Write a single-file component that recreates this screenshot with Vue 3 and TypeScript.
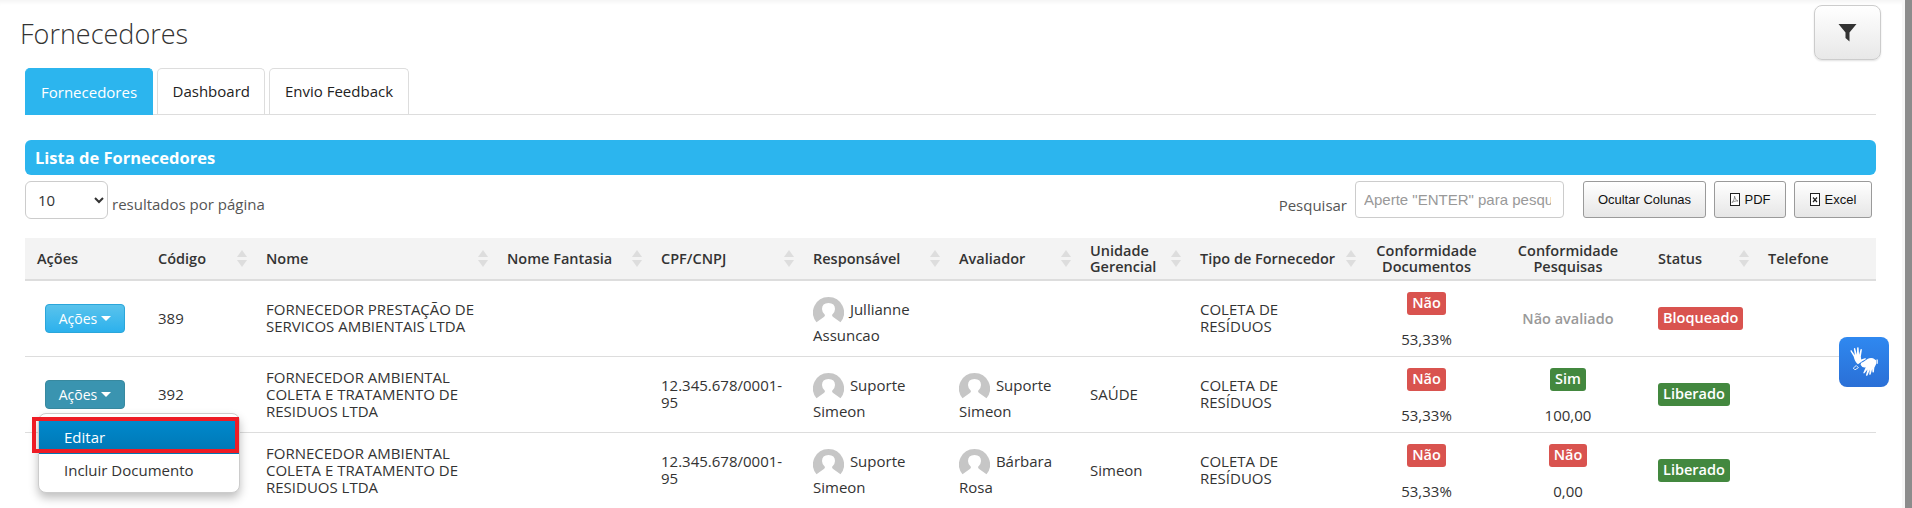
<script setup lang="ts">
interface Person { first: string; rest: string }
interface Row {
  code: string
  name: string
  doc: string
  resp: Person
  aval: Person | null
  unit: string
  type: string
  confDoc: string
  search: { label: string; ok: boolean; value: string } | null
  status: string
  statusOk: boolean
  open: boolean
  covered: boolean
}
const rows: Row[] = [
  { code: '389', name: 'FORNECEDOR PRESTAÇÃO DE SERVICOS AMBIENTAIS LTDA', doc: '', resp: { first: 'Jullianne', rest: 'Assuncao' }, aval: null, unit: '', type: 'COLETA DE RESÍDUOS', confDoc: '53,33%', search: null, status: 'Bloqueado', statusOk: false, open: false, covered: false },
  { code: '392', name: 'FORNECEDOR AMBIENTAL COLETA E TRATAMENTO DE RESIDUOS LTDA', doc: '12.345.678/0001-95', resp: { first: 'Suporte', rest: 'Simeon' }, aval: { first: 'Suporte', rest: 'Simeon' }, unit: 'SAÚDE', type: 'COLETA DE RESÍDUOS', confDoc: '53,33%', search: { label: 'Sim', ok: true, value: '100,00' }, status: 'Liberado', statusOk: true, open: true, covered: false },
  { code: '', name: 'FORNECEDOR AMBIENTAL COLETA E TRATAMENTO DE RESIDUOS LTDA', doc: '12.345.678/0001-95', resp: { first: 'Suporte', rest: 'Simeon' }, aval: { first: 'Bárbara', rest: 'Rosa' }, unit: 'Simeon', type: 'COLETA DE RESÍDUOS', confDoc: '53,33%', search: { label: 'Não', ok: false, value: '0,00' }, status: 'Liberado', statusOk: true, open: false, covered: true }
]
const headers = [
  { t: 'Ações', s: false, c: false },
  { t: 'Código', s: true, c: false },
  { t: 'Nome', s: true, c: false },
  { t: 'Nome Fantasia', s: true, c: false },
  { t: 'CPF/CNPJ', s: true, c: false },
  { t: 'Responsável', s: true, c: false },
  { t: 'Avaliador', s: true, c: false },
  { t: 'Unidade Gerencial', s: true, c: false },
  { t: 'Tipo de Fornecedor', s: true, c: false },
  { t: 'Conformidade Documentos', s: false, c: true },
  { t: 'Conformidade Pesquisas', s: false, c: true },
  { t: 'Status', s: true, c: false },
  { t: 'Telefone', s: false, c: false }
]
const colWidths = [121, 108, 241, 154, 152, 146, 131, 110, 175, 127, 156, 110, 120]
const avatarPath = 'M15.5 0A15.5 15.5 0 0 0 3.5 25.3L10.5 20.2Q12 19.200 12 18 9 15.500 9 12 9 6 15.500 6 22 6 22 12 22 15.500 19 18 19 19.200 20.500 20.200L27.500 25.300A15.5 15.5 0 0 0 15.500 0Z'
</script>

<template>
  <div class="page">
    <main class="main">
      <header class="top">
        <h1 class="title">Fornecedores</h1>
        <button class="filter" type="button" aria-label="Filtro">
          <svg width="19" height="19" viewBox="0 0 19 19"><path d="M0.5 1h18L11.5 9.5V18.5L7.5 15V9.5Z" fill="#333" /></svg>
        </button>
      </header>

      <nav class="tabs">
        <a class="tab active">Fornecedores</a>
        <a class="tab">Dashboard</a>
        <a class="tab">Envio Feedback</a>
      </nav>

      <div class="bar">Lista de Fornecedores</div>

      <div class="tools">
        <div class="length">
          <select class="sel"><option>10</option></select>
          <span class="muted">resultados por página</span>
        </div>
        <div class="right">
          <span class="muted search-label">Pesquisar</span>
          <input class="search" type="text" placeholder='Aperte "ENTER" para pesquisar' />
          <button class="btn w-col" type="button">Ocultar Colunas</button>
          <button class="btn w-pdf" type="button">
            <svg class="file" width="10" height="13" viewBox="0 0 10 13"><rect x=".5" y=".5" width="9" height="12" fill="#fff" stroke="#222" /><path d="M2 9.5C3.5 8 4.6 5.5 4.6 3.2 5 5.5 6 7.4 8 8 6 7.800 3.800 8.200 2 9.500Z" fill="none" stroke="#777" stroke-width=".8" /></svg>
            PDF
          </button>
          <button class="btn w-xls" type="button">
            <svg class="file" width="10" height="13" viewBox="0 0 10 13"><rect x=".5" y=".5" width="9" height="12" fill="#fff" stroke="#222" /><path d="M3 4.5l4 4.5M7 4.5l-4 4.5" stroke="#222" stroke-width="1.2" /></svg>
            Excel
          </button>
        </div>
      </div>

      <table class="grid">
        <colgroup>
          <col v-for="(w, i) in colWidths" :key="i" :style="{ width: w + 'px' }" />
        </colgroup>
        <thead>
          <tr>
            <th v-for="h in headers" :key="h.t" :class="{ center: h.c }">
              {{ h.t }}
              <span v-if="h.s" class="sort"><i class="up"></i><i class="down"></i></span>
            </th>
          </tr>
        </thead>
        <tbody>
          <tr v-for="(r, idx) in rows" :key="idx">
            <td class="act">
              <button v-if="!r.covered" class="acoes" :class="{ pressed: r.open }" type="button">Ações <i class="caret"></i></button>
              <div v-if="r.open" class="menu">
                <div class="item selected">Editar</div>
                <div class="item">Incluir Documento</div>
                <div class="mark"></div>
              </div>
            </td>
            <td>{{ r.code }}</td>
            <td>{{ r.name }}</td>
            <td></td>
            <td>{{ r.doc }}</td>
            <td class="person">
              <svg class="avatar" viewBox="0 0 31 27"><path :d="avatarPath" fill="#c6c6c6" /></svg>
              {{ r.resp.first }} {{ r.resp.rest }}
            </td>
            <td class="person">
              <template v-if="r.aval">
                <svg class="avatar" viewBox="0 0 31 27"><path :d="avatarPath" fill="#c6c6c6" /></svg>
                {{ r.aval.first }} {{ r.aval.rest }}
              </template>
            </td>
            <td>{{ r.unit }}</td>
            <td class="type">{{ r.type }}</td>
            <td>
              <div class="stack">
                <span class="badge red">Não</span>
                <span>{{ r.confDoc }}</span>
              </div>
            </td>
            <td>
              <div v-if="r.search" class="stack">
                <span class="badge" :class="r.search.ok ? 'green' : 'red'">{{ r.search.label }}</span>
                <span>{{ r.search.value }}</span>
              </div>
              <div v-else class="none">Não avaliado</div>
            </td>
            <td><span class="badge" :class="r.statusOk ? 'green' : 'red'">{{ r.status }}</span></td>
            <td></td>
          </tr>
        </tbody>
      </table>

      <button class="libras" type="button" aria-label="Libras">
        <svg width="30" height="31" viewBox="0 0 34 36" fill="#fff">
          <path d="M5 11L1.500 5.200Q1 3.800 2.200 3.600L6.500 9.500 5.200 2.300Q5.300 1 6.600 1.200L8.800 9 9 .9Q9.500 -.2 10.700 .6L11.300 9 13 2.700Q14 1.800 14.600 3L13.300 11.300 13.800 14.500 18 13Q20 12.800 19 14.300L15 16.500 10 20Q6.500 18 5 11Z" />
          <path d="M13 20.500Q13 18 16 17.500L21 14Q24 12 27.500 13L31 15.500V20L29 24 28.500 29Q27.500 30.500 26.800 29L26.500 25.500 24.800 31.500Q23.800 32.800 23 31.500L23.800 26 21 33Q20 34 19.300 32.800L21 26 17.500 30.500Q16.500 31 16.200 29.800L19 23.500Q15 24.500 13 20.500Z" />
          <rect x="31.500" y="14.500" width="1.500" height="5" />
          <path d="M8 21.500L4.500 24.500 6.500 26.500 10.500 24Z" fill="none" stroke="#fff" stroke-width="1" />
        </svg>
      </button>
    </main>
    <div class="scrollbar"></div>
  </div>
</template>

<style>
html, body { margin: 0; height: 100%; overflow: hidden; background: #fff; }
</style>

<style scoped>
.page {
  display: flex;
  width: 1912px;
  height: 508px;
  overflow: hidden;
  font-family: "Open Sans", sans-serif;
  font-size: 15px;
  line-height: 17px;
  color: #333;
  background: #fff;
}
.main {
  position: relative;
  flex: 1;
  min-width: 0;
  padding: 5px 26px 0 25px;
  box-shadow: inset 0 5px 4px -3px rgba(0, 0, 0, .05);
}
.scrollbar {
  box-sizing: border-box;
  width: 10px;
  background: #8c8c8c;
  border-left: 3px solid #f7f7f7;
  flex: none;
}
.top {
  display: flex;
  justify-content: space-between;
  align-items: flex-start;
  height: 63px;
  margin-right: -5px;
}
.title {
  margin: 11px 0 0 -5px;
  font-size: 27px;
  line-height: 36px;
  font-weight: 300;
  color: #333;
}
.filter {
  width: 67px;
  height: 55px;
  padding: 0;
  display: flex;
  align-items: center;
  justify-content: center;
  border: 1px solid #ccc;
  border-radius: 8px;
  background: linear-gradient(#fff, #e8e8e8);
  box-shadow: 0 1px 2px rgba(0, 0, 0, .12);
}
.tabs {
  display: flex;
  gap: 4px;
  height: 47px;
  border-bottom: 1px solid #ddd;
  box-sizing: border-box;
}
.tab {
  display: flex;
  align-items: center;
  justify-content: center;
  box-sizing: border-box;
  height: 46px;
  padding: 0 14.500px;
  border: 1px solid #ddd;
  border-bottom: 0;
  border-radius: 5px 5px 0 0;
  color: #222;
}
.tab.active {
  height: 47px;
  padding: 0 15px;
  background: #2cb5ee;
  border-color: #2cb5ee;
  color: #fff;
}
.bar {
  height: 35px;
  margin-top: 25px;
  padding-left: 10px;
  display: flex;
  align-items: center;
  background: #2cb5ee;
  border-radius: 6px;
  color: #fff;
  font-size: 16.500px;
  font-weight: 700;
}
.tools {
  display: flex;
  justify-content: space-between;
  align-items: flex-start;
  height: 57px;
  margin-top: 6px;
}
.length { display: flex; align-items: flex-end; gap: 4px; }
.muted { color: #555; line-height: 17px; }
.length .muted { margin-bottom: 6px; }
.sel {
  width: 83px;
  height: 38px;
  box-sizing: border-box;
  padding-left: 8px;
  border: 1px solid #ccc;
  border-radius: 6px;
  background: #fff;
  color: #333;
  font-family: "Open Sans", sans-serif;
  font-size: 15px;
}
.right { display: flex; align-items: flex-start; }
.search-label { margin: 16px 8px 0 0; }
.search {
  width: 209px;
  height: 37px;
  box-sizing: border-box;
  padding: 0 12px 0 8px;
  border: 1px solid #ccc;
  border-radius: 4px;
  font-family: "Liberation Sans", Arial, sans-serif;
  font-size: 15px;
  margin-right: 19px;
}
.search::placeholder { color: #999; }
.btn {
  height: 37px;
  box-sizing: border-box;
  display: flex;
  align-items: center;
  justify-content: center;
  gap: 5px;
  padding: 0;
  margin-right: 8px;
  border: 1px solid #9a9a9a;
  border-radius: 3px;
  background: linear-gradient(#fff, #e6e6e6);
  font-family: "Liberation Sans", Arial, sans-serif;
  font-size: 13px;
  color: #111;
}
.btn:last-child { margin-right: 4px; }
.w-col { width: 123px; }
.w-pdf { width: 72px; }
.w-xls { width: 78px; }
.file { flex: none; }
.grid {
  width: 1851px;
  border-collapse: collapse;
  table-layout: fixed;
}
th {
  position: relative;
  height: 41px;
  padding: 0 12px;
  background: #f3f3f3;
  border-bottom: 2px solid #ddd;
  font-size: 14.500px;
  font-weight: 600;
  text-align: left;
  line-height: 16px;
  color: #333;
}
th.center { text-align: center; padding: 0 4px; }
.sort {
  position: absolute;
  right: 7px;
  top: 12px;
  display: flex;
  flex-direction: column;
  gap: 3px;
}
.sort i { display: block; width: 0; height: 0; border-left: 5px solid transparent; border-right: 5px solid transparent; }
.sort .up { border-bottom: 7px solid #ddd; }
.sort .down { border-top: 7px solid #ddd; }
td {
  box-sizing: border-box;
  height: 76px;
  padding: 0 12px;
  border-bottom: 1px solid #ddd;
  vertical-align: middle;
  color: #333;
}
.act { position: relative; padding-left: 20px; }
.acoes {
  width: 80px;
  height: 29px;
  padding: 0;
  border: 1px solid #2ba6da;
  border-radius: 4px;
  background: linear-gradient(#5ac3ec, #2cb1ed);
  color: #fff;
  font-family: "Open Sans", sans-serif;
  font-size: 14px;
  display: inline-flex;
  align-items: center;
  justify-content: center;
  gap: 4px;
}
.acoes.pressed {
  border-color: #38899f;
  background: #3a94b0;
}
.caret {
  display: block;
  width: 0;
  height: 0;
  border-left: 5px solid transparent;
  border-right: 5px solid transparent;
  border-top: 5px solid #fff;
}
.menu {
  position: absolute;
  z-index: 2;
  left: 13px;
  top: 56px;
  box-sizing: border-box;
  width: 202px;
  height: 80px;
  padding: 7px 0 0;
  background: #fff;
  border: 1px solid #ccc;
  border-radius: 8px;
  box-shadow: 0 5px 10px rgba(0, 0, 0, .25);
}
.item {
  height: 33px;
  padding-left: 25px;
  display: flex;
  align-items: center;
}
.item.selected {
  background: linear-gradient(#0088cc, #0077b3);
  color: #fff;
}
.mark {
  position: absolute;
  left: -7px;
  top: 3px;
  width: 207px;
  height: 36px;
  box-sizing: border-box;
  border: 4px solid #ee1c25;
}
.person { padding: 7px 6px 0 12px; line-height: 26px; }
.avatar {
  width: 31px;
  height: 27px;
  margin: -4px 2px -4px 0;
  vertical-align: middle;
}
.type { padding-right: 40px; }
.stack {
  display: flex;
  flex-direction: column;
  align-items: center;
  gap: 16px;
  padding-top: 3px;
}
.badge {
  display: inline-block;
  box-sizing: border-box;
  height: 23px;
  padding: 0 5px;
  border-radius: 3px;
  color: #fff;
  font-size: 14.500px;
  font-weight: 600;
  line-height: 22px;
}
.red { background: #d9534f; }
.green { background: #43883f; }
.none { text-align: center; color: #999; font-size: 14.500px; font-weight: 600; }
.libras {
  position: absolute;
  left: 1839px;
  top: 337px;
  width: 50px;
  height: 50px;
  padding: 0;
  border: 0;
  border-radius: 8px;
  background: linear-gradient(#2f88f0, #2a6fd6);
  display: flex;
  align-items: center;
  justify-content: center;
}
</style>
